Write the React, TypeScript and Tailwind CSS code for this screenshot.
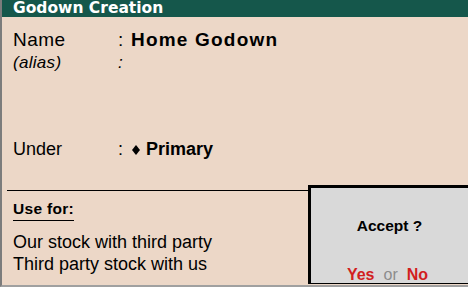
export default function App() {
  return (
    <div
      className="w-[468px] h-[287px] flex flex-col bg-[#ecd7c7] border-l-2 border-l-[#7c7c7c] border-b-2 border-b-[#a0a0a0] overflow-hidden text-black"
      style={{ fontFamily: '"Liberation Sans", Arial, sans-serif' }}
    >
      {/* title bar */}
      <div
        className="h-[17px] shrink-0 bg-[#15574b] pl-[11px] text-white font-bold text-[15.5px] leading-[17px]"
        style={{ fontFamily: '"DejaVu Sans", Tahoma, sans-serif' }}
      >
        Godown Creation
      </div>

      <div className="flex flex-col flex-1 pl-[11px]">
        <div className="flex mt-[12px] text-[19px] leading-[22px]">
          <div className="w-[105px] tracking-[0.5px]">Name</div>
          <div className="w-[13px]">:</div>
          <div className="font-bold tracking-[1.2px]">Home Godown</div>
        </div>
        <div className="flex mt-[2px] text-[17px] leading-[19px] italic">
          <div className="w-[105px] tracking-[0.3px]">(alias)</div>
          <div className="w-[13px]">:</div>
        </div>

        <div className="flex items-center mt-[67px] text-[18px] leading-[21px]">
          <div className="w-[105px]">Under</div>
          <div className="w-[14px]">:</div>
          <svg width="8" height="10" viewBox="0 0 8 10" className="mr-[6px] mt-[1px]">
            <polygon points="4,0 8,5 4,10 0,5" fill="#000" />
          </svg>
          <div className="font-bold">Primary</div>
        </div>
      </div>

      {/* bottom section */}
      <div className="flex h-[100px] shrink-0">
        <div className="flex-1 ml-[5px] mt-[5px] border-t border-black pl-[6px] pt-[6px]">
          <div className="inline-block font-bold text-[15.5px] leading-[17px] tracking-[0.3px] pb-[3px] border-b border-black">
            Use for:
          </div>
          <div className="mt-[10px] text-[18px] leading-[22px]">
            <div>Our stock with third party</div>
            <div>Third party stock with us</div>
          </div>
        </div>
        <div className="w-[160px] h-[99px] bg-[#d9d9d9] border-t-[3px] border-l-[3px] border-b border-black flex flex-col items-center">
          <div className="mt-[29px] font-bold text-[15.5px] leading-[17px]">Accept ?</div>
          <div className="mt-[32px] flex items-baseline gap-[9px] text-[16px] leading-[18px] -ml-[4px]">
            <span className="font-bold text-[#d21f1f]">Yes</span>
            <span className="text-[#8c8c8c]">or</span>
            <span className="font-bold text-[#d21f1f]">No</span>
          </div>
        </div>
      </div>
    </div>
  );
}
